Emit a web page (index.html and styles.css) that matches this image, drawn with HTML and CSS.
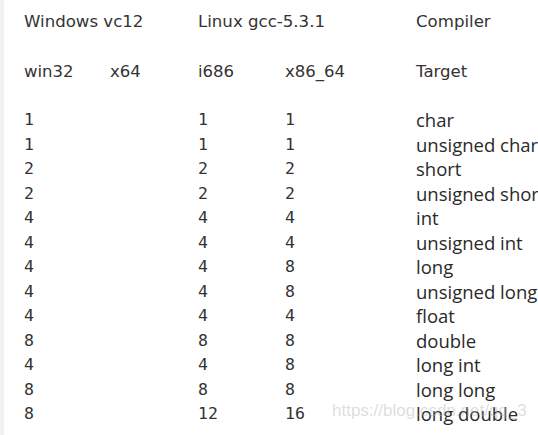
FILE: index.html
```html
<!DOCTYPE html>
<html>
<head>
<meta charset="utf-8">
<link rel="stylesheet" href="styles.css">
</head>
<body>
<div class="edge"></div>
<div class="sheet">
  <div class="grid head1">
    <span class="c12">Windows vc12</span>
    <span class="c34">Linux gcc-5.3.1</span>
    <span class="name">Compiler</span>
  </div>
  <div class="grid head2">
    <span>win32</span><span>x64</span><span>i686</span><span>x86_64</span><span class="name">Target</span>
  </div>
  <div class="grid data">
    <span>1</span><span></span><span>1</span><span>1</span><span class="name">char</span>
    <span>1</span><span></span><span>1</span><span>1</span><span class="name">unsigned char</span>
    <span>2</span><span></span><span>2</span><span>2</span><span class="name">short</span>
    <span>2</span><span></span><span>2</span><span>2</span><span class="name">unsigned short</span>
    <span>4</span><span></span><span>4</span><span>4</span><span class="name">int</span>
    <span>4</span><span></span><span>4</span><span>4</span><span class="name">unsigned int</span>
    <span>4</span><span></span><span>4</span><span>8</span><span class="name">long</span>
    <span>4</span><span></span><span>4</span><span>8</span><span class="name">unsigned long</span>
    <span>4</span><span></span><span>4</span><span>4</span><span class="name">float</span>
    <span>8</span><span></span><span>8</span><span>8</span><span class="name">double</span>
    <span>4</span><span></span><span>4</span><span>8</span><span class="name">long int</span>
    <span>8</span><span></span><span>8</span><span>8</span><span class="name">long long</span>
    <span>8</span><span></span><span>12</span><span>16</span><span class="name">long double</span>
  </div>
  <div class="watermark">https://blog.csdn.net/qq_3</div>
</div>
</body>
</html>
```
FILE: styles.css
```css
html, body {
  margin: 0;
  padding: 0;
  background: #ffffff;
  overflow: hidden;
}
body {
  width: 538px;
  height: 435px;
  display: flex;
  color: #333333;
  font-family: "DejaVu Sans", sans-serif;
}
.edge {
  width: 4px;
  background: #f1f1f1;
  flex: none;
}
.sheet {
  position: relative;
  flex: 1;
  min-width: 0;
  overflow: hidden;
  padding: 9px 0 0 20px;
}
.grid {
  display: grid;
  grid-template-columns: 86px 88px 87px 131px 1fr;
  white-space: nowrap;
  font-size: 16.5px;
  line-height: 24.5px;
}
.head1 {
  font-size: 16.6px;
  padding-top: 1px;
  margin-bottom: 25.5px;
}
.head2 { margin-bottom: 23.5px; }
.c12 { grid-column: 1 / span 2; }
.c34 { grid-column: 3 / span 2; }
.data {
  font-family: "DejaVu Sans Mono", monospace;
}
.name {
  font-family: "Open Sans", sans-serif;
  font-size: 18.5px;
  color: #2a2a2a;
}
.head1 .name, .head2 .name {
  font-family: "DejaVu Sans", sans-serif;
  font-size: 16.6px;
  color: #333333;
}
.watermark {
  position: absolute;
  left: 328px;
  top: 401px;
  font-family: "Liberation Sans", sans-serif;
  font-size: 17px;
  color: rgba(180, 180, 180, 0.45);
  white-space: nowrap;
}
```
